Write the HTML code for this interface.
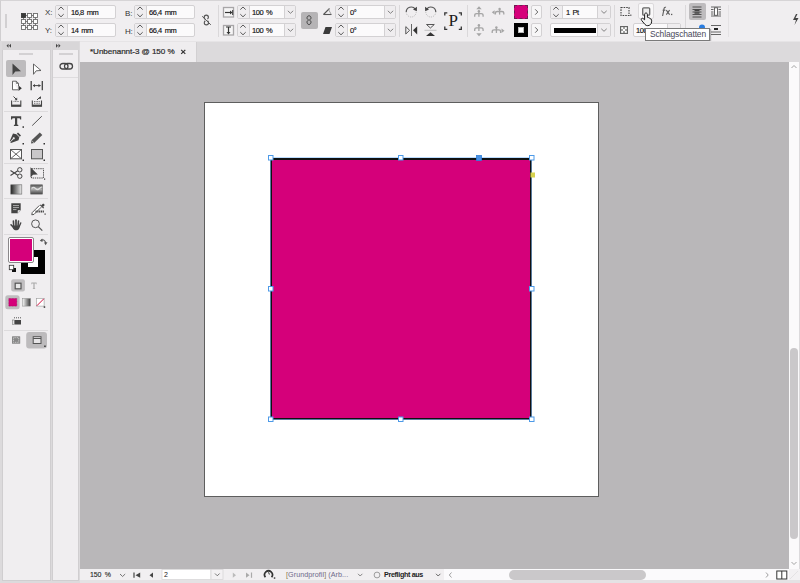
<!DOCTYPE html>
<html><head><meta charset="utf-8">
<style>
*{margin:0;padding:0;box-sizing:border-box}
html,body{width:800px;height:583px;overflow:hidden;background:#dcdadc;font-family:"Liberation Sans",sans-serif;}
.a{position:absolute}
#top{left:0;top:0;width:800px;height:41px;background:#f0eef0;border-top:1px solid #d6d4d6;border-left:1px solid #d0ced0}
.fld{position:absolute;height:14px;background:#fbfafb;border:1px solid #d3d1d3;border-radius:2px}
.spin svg,.dd svg{display:block}
.spin{position:absolute;left:0;top:0;bottom:0;width:12px;background:#efedef;border-right:1px solid #d3d1d3}
.dd{position:absolute;right:0;top:0;bottom:0;width:11px;background:#efedef;border-left:1px solid #d3d1d3}
.ftx{position:absolute;top:2px;font-size:7.5px;color:#111;white-space:nowrap;letter-spacing:-0.45px;word-spacing:1.2px;-webkit-text-stroke:0.15px #111}
.lbl{position:absolute;font-size:8px;color:#333;letter-spacing:-0.2px}
.sep{position:absolute;width:1px;background:#dad8da}
#hdrL{left:2px;top:42px;width:49px;height:8px;background:#d8d6d8}
#hdrR{left:52px;top:42px;width:27px;height:8px;background:#d8d6d8}
#panL{left:2px;top:50px;width:49px;height:531px;background:#f0eef0;border:1px solid #d0ced0;border-top:none}
#panR{left:52px;top:50px;width:27px;height:531px;background:#f0eef0;border:1px solid #d0ced0;border-top:none}
#tabbar{left:80px;top:42px;width:720px;height:20px;background:#dcdadc}
#tab{left:80px;top:42px;width:116px;height:20px;background:#efedef}
#canvas{left:80px;top:62px;width:709px;height:507px;background:#b9b7b9}
#vscroll{left:789px;top:62px;width:10px;height:507px;background:#fbfafb}
#vthumb{left:790px;top:348px;width:8px;height:191px;background:#cac8ca;border-radius:4px}
#status{left:80px;top:569px;width:720px;height:11px;background:#f3f1f3}
#page{left:204px;top:102px;width:395px;height:395px;background:#fff;border:1px solid #5e5e5e}
#rect{left:270px;top:158px;width:262px;height:262px;background:#d5007a;border:2px solid #111}
.h{position:absolute;width:6px;height:6px;border:1px solid #4a90e2;background:#fff}
</style></head><body>

<div id="top" class="a"></div>
<!-- grip -->
<div class="a" style="left:5px;top:14px;width:2px;height:14px;background:#d2d0d2"></div>
<!-- reference point grid -->
<svg class="a" style="left:20px;top:11.5px" width="20" height="20" viewBox="0 0 20 20">
<g stroke="#6e6e6e" stroke-width="0.9" fill="#fff">
<line x1="3.5" y1="3.5" x2="15.5" y2="3.5"/><line x1="3.5" y1="9.5" x2="15.5" y2="9.5"/><line x1="3.5" y1="15.5" x2="15.5" y2="15.5"/>
<line x1="3.5" y1="3.5" x2="3.5" y2="15.5"/><line x1="9.5" y1="3.5" x2="9.5" y2="15.5"/><line x1="15.5" y1="3.5" x2="15.5" y2="15.5"/>
<rect x="1.5" y="1.5" width="4" height="4" fill="#3a3a3a" stroke="#3a3a3a"/>
<rect x="7.5" y="1.5" width="4" height="4"/><rect x="13.5" y="1.5" width="4" height="4"/>
<rect x="1.5" y="7.5" width="4" height="4"/><rect x="7.5" y="7.5" width="4" height="4"/><rect x="13.5" y="7.5" width="4" height="4"/>
<rect x="1.5" y="13.5" width="4" height="4"/><rect x="7.5" y="13.5" width="4" height="4"/><rect x="13.5" y="13.5" width="4" height="4"/>
</g></svg>
<div class="lbl" style="left:45px;top:8px">X:</div>
<div class="lbl" style="left:45px;top:26px">Y:</div>
<div class="fld" style="left:55px;top:5px;width:61px"><div class="spin"><svg width="11" height="12" viewBox="0 0 11 12"><path d="M2.3 3.6L5 1L7.7 3.6M2.3 8.2L5 10.8L7.7 8.2" stroke="#4a4a4a" fill="none" stroke-width="0.9"/></svg></div><div class="ftx" style="left:15px">16,8 mm</div></div>
<div class="fld" style="left:55px;top:23px;width:61px"><div class="spin"><svg width="11" height="12" viewBox="0 0 11 12"><path d="M2.3 3.6L5 1L7.7 3.6M2.3 8.2L5 10.8L7.7 8.2" stroke="#4a4a4a" fill="none" stroke-width="0.9"/></svg></div><div class="ftx" style="left:15px">14 mm</div></div>
<div class="lbl" style="left:125px;top:9px">B:</div>
<div class="lbl" style="left:125px;top:27px">H:</div>
<div class="fld" style="left:134px;top:5px;width:61px"><div class="spin"><svg width="11" height="12" viewBox="0 0 11 12"><path d="M2.3 3.6L5 1L7.7 3.6M2.3 8.2L5 10.8L7.7 8.2" stroke="#4a4a4a" fill="none" stroke-width="0.9"/></svg></div><div class="ftx" style="left:14px">66,4 mm</div></div>
<div class="fld" style="left:134px;top:23px;width:61px"><div class="spin"><svg width="11" height="12" viewBox="0 0 11 12"><path d="M2.3 3.6L5 1L7.7 3.6M2.3 8.2L5 10.8L7.7 8.2" stroke="#4a4a4a" fill="none" stroke-width="0.9"/></svg></div><div class="ftx" style="left:14px">66,4 mm</div></div>
<!-- unlink -->
<svg class="a" style="left:200px;top:13px" width="14" height="14" viewBox="0 0 14 14">
<path d="M5.2 6.3C4.5 5.8 4.2 5 4.2 4.2C4.2 3 5 2.1 6.3 2.1C7.6 2.1 8.4 3 8.4 4.2C8.4 5 8 5.6 7.4 6M7.5 7.6C8.2 8.1 8.5 8.9 8.5 9.7C8.5 10.9 7.7 11.9 6.4 11.9C5.1 11.9 4.3 10.9 4.3 9.7C4.3 8.9 4.6 8.3 5.3 7.8" stroke="#555" stroke-width="1.15" fill="none"/>
<line x1="2.2" y1="3.3" x2="10.8" y2="11.8" stroke="#555" stroke-width="1"/></svg>
<div class="sep" style="left:218px;top:5px;height:32px"></div>
<!-- scale icons -->
<svg class="a" style="left:222px;top:6px" width="14" height="13" viewBox="0 0 14 13">
<rect x="1.5" y="1.5" width="10" height="9.5" fill="#f6f5f6" stroke="#a8a6a8" stroke-width="1.3"/>
<path d="M3 6.5H9" stroke="#333" stroke-width="1.2"/><path d="M8 4.5L10.5 6.5L8 8.5Z" fill="#333"/><path d="M10.7 4V9" stroke="#333" stroke-width="1"/>
</svg>
<svg class="a" style="left:222px;top:24px" width="14" height="13" viewBox="0 0 14 13">
<rect x="1.5" y="1.5" width="10" height="9.5" fill="#f6f5f6" stroke="#a8a6a8" stroke-width="1.3"/>
<path d="M6.5 3V9" stroke="#333" stroke-width="1.2"/><path d="M4.5 8L6.5 10.5L8.5 8Z" fill="#333"/><path d="M4 3H9" stroke="#333" stroke-width="1"/>
</svg>
<div class="fld" style="left:237px;top:5px;width:59px"><div class="spin"><svg width="11" height="12" viewBox="0 0 11 12"><path d="M2.3 3.6L5 1L7.7 3.6M2.3 8.2L5 10.8L7.7 8.2" stroke="#4a4a4a" fill="none" stroke-width="0.9"/></svg></div><div class="ftx" style="left:14px">100 %</div><div class="dd"><svg width="11" height="12" viewBox="0 0 11 12"><path d="M2.8 4.8L5.5 7.3L8.2 4.8" stroke="#777" fill="none" stroke-width="0.9"/></svg></div></div>
<div class="fld" style="left:237px;top:23px;width:59px"><div class="spin"><svg width="11" height="12" viewBox="0 0 11 12"><path d="M2.3 3.6L5 1L7.7 3.6M2.3 8.2L5 10.8L7.7 8.2" stroke="#4a4a4a" fill="none" stroke-width="0.9"/></svg></div><div class="ftx" style="left:14px">100 %</div><div class="dd"><svg width="11" height="12" viewBox="0 0 11 12"><path d="M2.8 4.8L5.5 7.3L8.2 4.8" stroke="#777" fill="none" stroke-width="0.9"/></svg></div></div>
<!-- chain button -->
<div class="a" style="left:301px;top:12px;width:17px;height:17px;background:#b6b4b6;border-radius:2px"></div>
<svg class="a" style="left:304px;top:14px" width="10" height="13" viewBox="0 0 10 13">
<path d="M5 1.8C3.6 1.8 3 2.8 3 3.9C3 5 3.8 5.6 4.6 6C3.8 6.4 3 7 3 8.1C3 9.2 3.6 10.5 5 10.5C6.4 10.5 7 9.2 7 8.1C7 7 6.2 6.4 5.4 6C6.2 5.6 7 5 7 3.9C7 2.8 6.4 1.8 5 1.8Z" stroke="#444" stroke-width="1" fill="none"/></svg>
<!-- angle/shear icons -->
<svg class="a" style="left:322px;top:7px" width="11" height="9" viewBox="0 0 11 9">
<path d="M1.5 7.5L7.5 1.5" stroke="#555" stroke-width="1.1"/><path d="M1.5 7.5H9.5" stroke="#555" stroke-width="1.1"/><path d="M6.5 2.5L9.3 7.5" stroke="#999" stroke-width="0.9"/></svg>
<svg class="a" style="left:322px;top:26px" width="11" height="9" viewBox="0 0 11 9">
<path d="M3.5 1H10L7.5 8H1Z" fill="#3a3a3a"/></svg>
<div class="fld" style="left:335px;top:5px;width:61px"><div class="spin"><svg width="11" height="12" viewBox="0 0 11 12"><path d="M2.3 3.6L5 1L7.7 3.6M2.3 8.2L5 10.8L7.7 8.2" stroke="#4a4a4a" fill="none" stroke-width="0.9"/></svg></div><div class="ftx" style="left:14px">0°</div><div class="dd"><svg width="11" height="12" viewBox="0 0 11 12"><path d="M2.8 4.8L5.5 7.3L8.2 4.8" stroke="#777" fill="none" stroke-width="0.9"/></svg></div></div>
<div class="fld" style="left:335px;top:23px;width:61px"><div class="spin"><svg width="11" height="12" viewBox="0 0 11 12"><path d="M2.3 3.6L5 1L7.7 3.6M2.3 8.2L5 10.8L7.7 8.2" stroke="#4a4a4a" fill="none" stroke-width="0.9"/></svg></div><div class="ftx" style="left:14px">0°</div><div class="dd"><svg width="11" height="12" viewBox="0 0 11 12"><path d="M2.8 4.8L5.5 7.3L8.2 4.8" stroke="#777" fill="none" stroke-width="0.9"/></svg></div></div>
<div class="sep" style="left:399px;top:5px;height:32px"></div>
<!-- rotate -->
<svg class="a" style="left:404px;top:5px" width="15" height="14" viewBox="0 0 15 14">
<path d="M2.2 7A5 5 0 0 1 11.3 4.2" stroke="#555" stroke-width="1.2" fill="none"/>
<path d="M12.2 7A5 5 0 0 1 2.2 7" stroke="#aaa" stroke-width="0.8" stroke-dasharray="1 1" fill="none"/>
<path d="M9 4.5L13 1.8L12.8 6.3Z" fill="#444"/></svg>
<svg class="a" style="left:423px;top:5px" width="15" height="14" viewBox="0 0 15 14">
<path d="M12.8 7A5 5 0 0 0 3.7 4.2" stroke="#555" stroke-width="1.2" fill="none"/>
<path d="M2.8 7A5 5 0 0 0 12.8 7" stroke="#aaa" stroke-width="0.8" stroke-dasharray="1 1" fill="none"/>
<path d="M6 4.5L2 1.8L2.2 6.3Z" fill="#444"/></svg>
<svg class="a" style="left:404px;top:23px" width="15" height="14" viewBox="0 0 15 14">
<path d="M1.8 3.6L5.6 7.3L1.8 11Z" fill="none" stroke="#555" stroke-width="1"/>
<path d="M7.5 1V13" stroke="#555" stroke-width="0.9"/>
<path d="M13.2 3.2L9 7.3L13.2 11.4Z" fill="#333"/></svg>
<svg class="a" style="left:423px;top:23px" width="15" height="14" viewBox="0 0 15 14">
<path d="M3.5 1.5H11.3L7.4 5Z" fill="none" stroke="#555" stroke-width="1"/>
<path d="M1.5 7.3H13.5" stroke="#bbb" stroke-width="0.9"/>
<path d="M3 13H12L7.5 9.3Z" fill="#333"/></svg>
<!-- [P] -->
<svg class="a" style="left:443px;top:11px" width="20" height="20" viewBox="0 0 20 20">
<path d="M1.8 4.5V1.8H4.3M15.8 1.8H18.3V4.5M18.3 15.6V18.3H15.8M4.3 18.3H1.8V15.6" stroke="#333" stroke-width="1.3" fill="none"/></svg>
<div class="a" style="left:448.5px;top:11px;font-family:'Liberation Serif',serif;font-size:17px;color:#1a1a1a;line-height:20px">P</div>
<div class="sep" style="left:467px;top:5px;height:32px"></div>


<!-- align icons (disabled) -->
<svg class="a" style="left:470px;top:3px" width="38" height="36" viewBox="470 3 38 36">
<g fill="#a5a5a5">
<path d="M476.3 9.2L479 6.2L481.7 9.2Z"/>
<circle cx="478.9" cy="11.3" r="1.2"/>
<path d="M491.8 12.3L494.6 10.2V14.4Z"/>
<circle cx="499.6" cy="9" r="1.2"/>
<circle cx="478.9" cy="25.3" r="1.2"/>
<path d="M476.3 33.3L479 36.3L481.7 33.3Z"/>
<circle cx="496.4" cy="27.4" r="1.2"/>
<path d="M501.5 28.5L504.5 30.8L501.5 33Z"/>
</g>
<g stroke="#a5a5a5" fill="none" stroke-width="1.3">
<path d="M478.9 11.5V16.8"/><path d="M474.7 16.8V15.5Q474.7 13.7 476.6 13.7H481.2Q483.1 13.7 483.1 15.5V16.8"/>
<path d="M499.6 9.2V14.6"/><path d="M495.4 14.6V13.3Q495.4 11.5 497.3 11.5H501.9Q503.8 11.5 503.8 13.3V14.6"/>
<path d="M478.9 25.5V31"/><path d="M474.7 31V29.7Q474.7 27.9 476.6 27.9H481.2Q483.1 27.9 483.1 29.7V31"/>
<path d="M496.4 27.6V33"/><path d="M492.2 33V31.7Q492.2 29.9 494.1 29.9H498.7Q500.6 29.9 500.6 31.7V33"/>
</g></svg>
<!-- fill / stroke swatches -->
<div class="a" style="left:514px;top:5px;width:14px;height:14px;background:#d5007a;border:1px dashed #6a2050"></div>
<div class="a" style="left:531px;top:5px;width:11px;height:14px;background:#f7f6f7;border:1px solid #d3d1d3;border-radius:2px"><svg style="display:block" width="9" height="12" viewBox="0 0 9 12"><path d="M3.2 3.3L5.8 6L3.2 8.7" stroke="#555" fill="none" stroke-width="0.9"/></svg></div>
<div class="a" style="left:514px;top:23px;width:14px;height:14px;background:#000"></div>
<div class="a" style="left:519px;top:28px;width:4px;height:4px;background:#fff;outline:1px solid #bbb"></div>
<div class="a" style="left:531px;top:23px;width:11px;height:14px;background:#f7f6f7;border:1px solid #d3d1d3;border-radius:2px"><svg style="display:block" width="9" height="12" viewBox="0 0 9 12"><path d="M3.2 3.3L5.8 6L3.2 8.7" stroke="#555" fill="none" stroke-width="0.9"/></svg></div>
<div class="fld" style="left:550px;top:5px;width:61px"><div class="spin"><svg width="11" height="12" viewBox="0 0 11 12"><path d="M2.3 3.6L5 1L7.7 3.6M2.3 8.2L5 10.8L7.7 8.2" stroke="#4a4a4a" fill="none" stroke-width="0.9"/></svg></div><div class="ftx" style="left:15px">1 Pt</div><div class="dd" style="width:13px"><svg width="12" height="12" viewBox="0 0 12 12"><path d="M3.3 4.8L6 7.3L8.7 4.8" stroke="#777" fill="none" stroke-width="0.9"/></svg></div></div>
<div class="fld" style="left:550px;top:23px;width:61px;background:#fdfcfd"><div class="a" style="left:3px;top:4px;width:42px;height:5px;background:#000"></div><div class="dd" style="width:13px"><svg width="12" height="12" viewBox="0 0 12 12"><path d="M3.3 4.8L6 7.3L8.7 4.8" stroke="#777" fill="none" stroke-width="0.9"/></svg></div></div>
<div class="sep" style="left:614px;top:5px;height:32px"></div>
<!-- corner options -->
<svg class="a" style="left:619px;top:6px" width="14" height="12" viewBox="0 0 14 12">
<rect x="2" y="1.5" width="8" height="8" fill="none" stroke="#444" stroke-width="1.1" stroke-dasharray="1.6 1"/>
<rect x="11.2" y="8.6" width="1.2" height="1.2" fill="#444"/></svg>
<!-- drop shadow (hover) -->
<div class="a" style="left:638px;top:3px;width:16px;height:16px;background:#f9f8f9;border:1px solid #dcdadc;border-radius:2px"></div>
<svg class="a" style="left:640px;top:6px" width="12" height="11" viewBox="0 0 12 11">
<rect x="2.7" y="1.8" width="7" height="7.4" fill="#ececec" stroke="#666" stroke-width="1.3" rx="1"/></svg>
<svg class="a" style="left:661px;top:6px" width="13" height="11" viewBox="0 0 13 11"><path d="M5 1.3C4 1 3.3 1.4 3.1 2.4L1.6 10" stroke="#5a5a5a" stroke-width="1.1" fill="none"/><path d="M1.6 4.2H4.4" stroke="#5a5a5a" stroke-width="1"/><path d="M5.3 4.2L8.6 8.6M8.6 4.2L5.3 8.6" stroke="#5a5a5a" stroke-width="1.1"/><rect x="10" y="7.8" width="1.3" height="1.3" fill="#5a5a5a"/></svg>
<!-- opacity -->
<svg class="a" style="left:619px;top:25px" width="10" height="10" viewBox="0 0 10 10">
<rect x="1.6" y="1.6" width="6.8" height="6.8" fill="#8e8e8e" stroke="#666" stroke-width="1.2"/>
<rect x="2.2" y="2.2" width="2" height="2" fill="#fff"/><rect x="5.8" y="2.2" width="2" height="2" fill="#fff"/><rect x="4" y="4" width="2" height="2" fill="#fff"/><rect x="2.2" y="5.8" width="2" height="2" fill="#fff"/><rect x="5.8" y="5.8" width="2" height="2" fill="#fff"/></svg>
<div class="fld" style="left:633px;top:23px;width:48px"><div class="ftx" style="left:2px">100 %</div><div class="dd" style="width:13px"></div></div>
<div class="sep" style="left:685px;top:5px;height:32px"></div>
<!-- wrap buttons -->
<div class="a" style="left:689px;top:3px;width:17px;height:17px;background:#bebcbe;border-radius:2px"></div>
<svg class="a" style="left:690px;top:5px" width="14" height="13" viewBox="0 0 14 13" stroke="#444">
<path d="M2.5 2H11.5M2.5 4.5H11.5M2.5 7H11.5M2.5 9.5H11.5M2.5 12H11.5" stroke-width="0.9"/>
<path d="M4.5 5.5H9.5M4.5 8H9.5" stroke-width="1.4"/></svg>
<svg class="a" style="left:709px;top:5px" width="14" height="13" viewBox="0 0 14 13" stroke="#555">
<path d="M2 2H12M2 11H12" stroke-width="0.9"/><path d="M2 4.5H4.5M2 7H4.5M2 9H4.5M9.5 4.5H12M9.5 7H12M9.5 9H12" stroke-width="0.9"/>
<rect x="5.5" y="2.8" width="3" height="7.5" fill="#fff" stroke-width="0.9"/></svg>
<svg class="a" style="left:697px;top:23px" width="10" height="8" viewBox="0 0 10 8"><circle cx="5" cy="4.5" r="3" fill="#2a7de1"/></svg>
<svg class="a" style="left:709px;top:23px" width="14" height="14" viewBox="0 0 14 14" stroke="#555">
<path d="M2 2.5H12M2 9H12M2 11.5H12" stroke-width="0.9"/><rect x="5" y="5" width="4" height="2" fill="#222" stroke="none"/></svg>
<div class="sep" style="left:728px;top:5px;height:32px;background:#e4e2e4"></div>
<!-- lightning -->
<svg class="a" style="left:791px;top:13px" width="9" height="13" viewBox="0 0 9 13">
<path d="M5 1L2 7H5L3.5 12L7.5 5H4.5L6.5 1Z" fill="#444"/></svg>
<!-- tooltip -->
<div class="a" style="left:645px;top:28px;width:65px;height:13px;background:#fff;border:1px solid #7a7a7a;box-shadow:1px 1px 1px rgba(0,0,0,0.25)"></div>
<div class="a" style="left:650px;top:29px;font-size:8.5px;color:#4a4a5a;letter-spacing:-0.15px;white-space:nowrap;line-height:11px">Schlagschatten</div>
<!-- hand cursor -->
<svg class="a" style="left:636px;top:3px" width="20" height="25" viewBox="0 0 20 25">
<path d="M10 10C9.2 10 8.6 10.6 8.6 11.5V16.8L7.2 15.6C6.6 15.1 5.7 15.2 5.4 15.9C5.1 16.4 5.3 17 5.7 17.5L9 21.5C9.8 22.3 10.7 22.8 11.8 22.7C13.8 22.6 15.6 21 15.6 18.8V17.2C15.6 16.4 15 15.8 14.3 15.8C14.1 15.2 13.5 14.8 12.9 14.9C12.6 14.4 12 14.2 11.4 14.3V11.5C11.4 10.6 10.8 10 10 10Z" fill="#f2f2f2" stroke="#1a1a1a" stroke-width="1"/></svg>
<div id="hdrL" class="a"></div>
<div id="hdrR" class="a"></div>
<div id="panL" class="a"></div>
<div id="panR" class="a"></div>

<!-- panel headers content -->
<svg class="a" style="left:0;top:42px" width="80" height="8" viewBox="0 0 80 8">
<path d="M8.5 1.8L6.5 3.8L8.5 5.8Z M11 1.8L9 3.8L11 5.8Z" fill="#444"/>
<path d="M56 1.8L58 3.8L56 5.8Z M58.5 1.8L60.5 3.8L58.5 5.8Z" fill="#444"/>
</svg>
<div class="a" style="left:19px;top:53px;width:14px;height:2px;background:#d3d1d3"></div>
<div class="a" style="left:59px;top:53px;width:14px;height:2px;background:#d3d1d3"></div>
<!-- panel 2 link icon -->
<svg class="a" style="left:58px;top:61px" width="17" height="11" viewBox="0 0 17 11">
<rect x="2" y="2.5" width="8" height="5.5" rx="2.75" fill="none" stroke="#444" stroke-width="1.3"/>
<rect x="6.5" y="2.5" width="8" height="5.5" rx="2.75" fill="none" stroke="#444" stroke-width="1.3"/></svg>
<div class="a" style="left:53px;top:77px;width:25px;height:1px;background:#dedcde"></div>
<!-- selection active btn -->
<div class="a" style="left:6px;top:60px;width:20px;height:17px;background:#bdbbbd;border-radius:2px"></div>
<svg class="a" style="left:0;top:50px" width="52" height="310" viewBox="0 50 52 310">
<!-- selection -->
<path d="M12.5 63.5V75L15.3 71.5L21 71.2Z" fill="#444"/>
<!-- direct selection -->
<path d="M33.5 64V74.3L36.2 70.8L41 70.5Z" fill="#fff" stroke="#555" stroke-width="0.9"/>
<!-- page tool -->
<path d="M12.5 81.2H16.3L18.5 83.4V86M18 89.8H12.5V81.2" fill="#fff" stroke="#555" stroke-width="0.9"/>
<path d="M16.3 81.2V83.4H18.5" fill="none" stroke="#555" stroke-width="0.8"/>
<path d="M18.5 85.5V91L21.8 88.3Z" fill="#333"/>
<!-- gap tool -->
<path d="M31.2 81V90.2M42.3 81V90.2" stroke="#444" stroke-width="1.3"/>
<path d="M33 85.6H40.5" stroke="#444" stroke-width="1"/>
<path d="M32.8 85.6L35 84V87.2Z M40.7 85.6L38.5 84V87.2Z" fill="#444"/>
<!-- content collector -->
<path d="M11.6 100.5V106.3H20.8V100.5" fill="none" stroke="#444" stroke-width="1.1"/>
<rect x="11.6" y="104.6" width="9.2" height="1.8" fill="#444"/>
<path d="M13.5 101.5H19" stroke="#666" stroke-width="0.8" stroke-dasharray="1 0.6"/>
<path d="M13.5 96.5L16.3 99.3" stroke="#444" stroke-width="1"/><path d="M17.2 97.5V100.2H14.5Z" fill="#444"/>
<!-- content placer -->
<path d="M32.3 100.5V106.3H41.5V100.5" fill="none" stroke="#444" stroke-width="1.1"/>
<rect x="32.3" y="104.6" width="9.2" height="1.8" fill="#444"/>
<path d="M34 101.5H40M34 103.3H40" stroke="#555" stroke-width="0.8" stroke-dasharray="1 0.6"/>
<path d="M37 100L39.8 97.2" stroke="#444" stroke-width="1"/><path d="M41 96V98.8H38.3Z" fill="#444"/>
<line x1="4" y1="111.5" x2="48" y2="111.5" stroke="#dddbdd" stroke-width="1"/>
<!-- type -->
<path d="M11 116.3H21.2V119.5H20.2L19.7 118.2H17.2V124.5L18.3 125V126H13.9V125L15 124.5V118.2H12.5L12 119.5H11Z" fill="#444"/>
<rect x="22.5" y="126.3" width="1.5" height="1.5" fill="#333"/>
<!-- line -->
<path d="M32.2 125.6L41.8 116.2" stroke="#555" stroke-width="1"/>
<!-- pen -->
<path d="M18 132.5L21 135.5L19.8 136.7L16.8 133.7Z" fill="#444"/>
<path d="M16.3 134.2L19.3 137.2L18.5 140.2L11 143L10.3 142.3L13.5 139.3A1 1 0 1 0 12.8 138.6L10.3 141.6L9.8 141.1L13 133.5Z" fill="#444"/>
<rect x="22.5" y="143" width="1.5" height="1.5" fill="#333"/>
<!-- pencil -->
<path d="M39.8 132.5L42.3 135L34.2 143.1L31 143.5L31.5 140.3Z" fill="#555"/>
<path d="M31.5 140.3L34.2 143.1" stroke="#eee" stroke-width="0.6"/>
<rect x="43.5" y="143" width="1.5" height="1.5" fill="#333"/>
<!-- rect frame -->
<rect x="10.5" y="149.5" width="11" height="9.3" fill="#fff" stroke="#555" stroke-width="1"/>
<path d="M10.5 149.5L21.5 158.8M21.5 149.5L10.5 158.8" stroke="#555" stroke-width="0.9"/>
<rect x="22.5" y="159.5" width="1.5" height="1.5" fill="#333"/>
<!-- rect -->
<rect x="31.5" y="149.5" width="11" height="9.3" fill="#c9c7c9" stroke="#555" stroke-width="1"/>
<rect x="43.5" y="159.5" width="1.5" height="1.5" fill="#333"/>
<line x1="4" y1="163.5" x2="48" y2="163.5" stroke="#dddbdd" stroke-width="1"/>
<!-- scissors -->
<circle cx="19.8" cy="169.8" r="2.2" fill="none" stroke="#444" stroke-width="1"/>
<circle cx="19.8" cy="176.2" r="2.2" fill="none" stroke="#444" stroke-width="1"/>
<path d="M17.8 170.8L10.5 175.5M17.8 175.2L10.5 170.5" stroke="#444" stroke-width="1.1"/>
<!-- free transform -->
<rect x="31.5" y="168.7" width="12" height="9.3" fill="none" stroke="#555" stroke-width="1" stroke-dasharray="1.4 0.8"/>
<path d="M30.5 167.3V177.5L33 174.8L37.8 174.5Z" fill="#444"/>
<rect x="44" y="178.5" width="1.2" height="1.2" fill="#333"/>
<!-- gradient swatch -->
<defs>
<linearGradient id="g1" x1="0" x2="1" y1="0" y2="0"><stop offset="0" stop-color="#222"/><stop offset="1" stop-color="#eee"/></linearGradient>
<linearGradient id="g2" x1="0" x2="0" y1="0" y2="1"><stop offset="0" stop-color="#555"/><stop offset="0.5" stop-color="#aaa"/><stop offset="1" stop-color="#444"/></linearGradient>
<linearGradient id="g3" x1="0" x2="1" y1="0" y2="0"><stop offset="0" stop-color="#fff"/><stop offset="1" stop-color="#333"/></linearGradient>
</defs>
<rect x="10.8" y="184.8" width="11" height="9.3" fill="url(#g1)" stroke="#666" stroke-width="0.6"/>
<!-- gradient feather -->
<rect x="30.7" y="184.8" width="11.8" height="9.3" fill="url(#g2)" stroke="#666" stroke-width="0.6"/>
<path d="M31.5 188.5Q33.5 186.5 35.5 188.5T39.5 188.5T42 187.5" stroke="#ddd" stroke-width="1.3" fill="none"/>
<line x1="4" y1="198.5" x2="48" y2="198.5" stroke="#dddbdd" stroke-width="1"/>
<!-- note -->
<path d="M11.3 203.3H20.7V210.5L18 213.2H11.3Z" fill="#444"/>
<path d="M13 205.6H19M13 207.6H19M13 209.6H16.5" stroke="#ccc" stroke-width="0.8"/>
<path d="M18 213.2V210.5H20.7" fill="#ddd" stroke="#eee" stroke-width="0.6"/>
<!-- eyedropper -->
<path d="M43.2 203.5L44.8 205.1L43 207L41.3 205.3Z" fill="#444"/>
<path d="M40.3 204.8L43.7 208.2" stroke="#444" stroke-width="1.2"/>
<path d="M41.2 207.2L34 214.4L31.8 214.8L32.2 212.6L39.4 205.4" fill="#fff" stroke="#444" stroke-width="0.9"/>
<path d="M35.5 211.5H44" stroke="#444" stroke-width="1.8" stroke-dasharray="1.2 0.6"/>
<rect x="44.5" y="213.5" width="1.2" height="1.2" fill="#333"/>
<!-- hand -->
<g stroke="#444" stroke-linecap="round" fill="none">
<path d="M13.7 226L13.4 221" stroke-width="1.6"/>
<path d="M16 225.5V220.2" stroke-width="1.7"/>
<path d="M18 226L18.5 221" stroke-width="1.6"/>
<path d="M19 227L20.7 223" stroke-width="1.4"/>
<path d="M14 228L11 224.8" stroke-width="1.5"/>
</g>
<path d="M12.5 225.5H19.8L19.3 228.2C18.8 229.6 17.6 230.3 16.2 230.3C14.6 230.3 13.4 229.4 12.8 228Z" fill="#444"/>
<!-- zoom -->
<circle cx="35.5" cy="223.8" r="3.9" fill="none" stroke="#555" stroke-width="1"/>
<path d="M38.3 226.6L42.3 230.6" stroke="#555" stroke-width="1.3"/>
<line x1="4" y1="234.5" x2="48" y2="234.5" stroke="#dddbdd" stroke-width="1"/>
</svg>

<!-- fill/stroke big -->
<div class="a" style="left:21px;top:250px;width:24px;height:24px;background:#000"></div>
<div class="a" style="left:28px;top:257px;width:10px;height:10px;background:#fff"></div>
<div class="a" style="left:7.5px;top:236.5px;width:26px;height:26px;border:1px solid #8a888a;border-radius:2px;background:#fff"></div>
<div class="a" style="left:9.5px;top:238.5px;width:22px;height:22px;background:#d5007a"></div>
<svg class="a" style="left:0;top:234px" width="52" height="118" viewBox="0 234 52 118">
<!-- swap arrow -->
<path d="M41 240.5Q44.5 238.5 45.8 243" stroke="#555" stroke-width="1.1" fill="none"/>
<path d="M39.8 240.8L42.3 238.6L42.5 241.9Z" fill="#555"/><path d="M44 242.5L47.5 242.3L45.6 245.3Z" fill="#555"/>
<!-- default -->
<rect x="12" y="268" width="4" height="4" fill="#111"/>
<rect x="9.3" y="265.3" width="4.4" height="4.4" fill="#fff" stroke="#333" stroke-width="0.8"/>
<!-- container btn -->
<rect x="11.2" y="279.3" width="13.7" height="12.3" rx="2" fill="#c0bec0"/>
<rect x="15.2" y="283.2" width="5.8" height="5.6" fill="#e8e8e8" stroke="#555" stroke-width="1.2"/>
<!-- T light -->
<path d="M31.4 282.6H36.6V284.3H36L35.8 283.5H34.6V288.3L35.2 288.6V289.1H32.8V288.6L33.4 288.3V283.5H32.2L32 284.3H31.4Z" fill="#aaa"/>
<!-- fill btn -->
<rect x="5.3" y="295.3" width="14.3" height="13.9" rx="2.5" fill="#bfbdbf"/>
<rect x="8.8" y="298.5" width="8" height="7.6" fill="#d5007a" stroke="#a0005a" stroke-width="0.5" stroke-dasharray="1 0.5"/>
<!-- gradient -->
<rect x="22.3" y="298.5" width="8.2" height="7.6" fill="url(#g3b)" stroke="#888" stroke-width="0.5"/>
<defs><linearGradient id="g3b" x1="0" x2="1"><stop offset="0" stop-color="#fff"/><stop offset="1" stop-color="#3a3a3a"/></linearGradient></defs>
<!-- none -->
<rect x="36.5" y="298.5" width="7.6" height="7.6" fill="#fff" stroke="#999" stroke-width="0.6"/>
<path d="M36.8 305.8L43.8 298.8" stroke="#d01040" stroke-width="1"/>
<rect x="43.7" y="306.3" width="1.5" height="1.5" fill="#333"/>
<!-- apply formatting -->
<rect x="12.5" y="320" width="1.6" height="4.5" fill="#fff" stroke="#777" stroke-width="0.6"/>
<rect x="14.5" y="320" width="6.5" height="4.5" fill="#444"/>
<path d="M14 317.8H21" stroke="#555" stroke-width="1" stroke-dasharray="1 1"/>
<line x1="4" y1="330.5" x2="48" y2="330.5" stroke="#dddbdd" stroke-width="1"/>
<!-- normal mode -->
<rect x="12" y="336.2" width="8.2" height="7.6" fill="#888" rx="0.5"/>
<rect x="13.5" y="337.7" width="5.2" height="4.6" fill="none" stroke="#ddd" stroke-width="0.8" stroke-dasharray="1 0.8"/>
<!-- screen mode btn -->
<rect x="26.2" y="332" width="20.8" height="16.4" rx="3" fill="#bdbbbd"/>
<rect x="33.2" y="336.7" width="7.8" height="6.8" fill="#e6e4e6" stroke="#555" stroke-width="1"/>
<path d="M33.2 338.5H41" stroke="#555" stroke-width="1"/>
<rect x="44.2" y="345.5" width="1.5" height="1.5" fill="#333"/>
</svg>
<div id="tabbar" class="a"></div>
<div id="tab" class="a"></div>
<div class="a" style="left:196px;top:42px;width:1px;height:20px;background:#d2d0d2"></div>
<div class="a" style="left:80px;top:41px;width:720px;height:1px;background:#e6e4e6"></div>

<div class="a" style="left:90px;top:47px;font-size:8.1px;color:#2a2a2a;white-space:nowrap;letter-spacing:-0.05px;line-height:10px;-webkit-text-stroke:0.2px #2a2a2a">*Unbenannt-3 @ 150 %</div>
<svg class="a" style="left:180px;top:49px" width="7" height="6" viewBox="0 0 7 6"><path d="M1.2 0.8L5.3 4.9M5.3 0.8L1.2 4.9" stroke="#333" stroke-width="1.2"/></svg>
<div id="canvas" class="a"></div>
<div id="vscroll" class="a"></div>
<div id="vthumb" class="a"></div>
<div id="status" class="a"></div>

<svg class="a" style="left:789px;top:62px" width="10" height="10" viewBox="0 0 10 10"><path d="M2.5 6L5 3.5L7.5 6" stroke="#999" stroke-width="0.9" fill="none"/></svg>
<svg class="a" style="left:789px;top:558px" width="10" height="10" viewBox="0 0 10 10"><path d="M2.5 4L5 6.5L7.5 4" stroke="#999" stroke-width="0.9" fill="none"/></svg>
<div class="a" style="left:80px;top:569px;width:364px;height:11px;background:#f1eff1"></div>
<div class="a" style="left:444px;top:569px;width:345px;height:11px;background:#fbfafc"></div>
<div class="a" style="left:509px;top:570px;width:137px;height:10px;background:#cac8ca;border-radius:5px"></div>
<div class="a" style="left:80px;top:580px;width:720px;height:3px;background:#e4e2e4"></div>
<div class="a" style="left:90px;top:570px;font-size:7px;color:#222;white-space:nowrap;line-height:9px;letter-spacing:-0.1px;word-spacing:1.5px;-webkit-text-stroke:0.1px #222">150 %</div>
<svg class="a" style="left:0;top:569px" width="800" height="12" viewBox="0 569 800 12">
<path d="M120 574L122.6 576.5L125.2 574" stroke="#666" stroke-width="0.9" fill="none"/>
<path d="M134 572.5V577.8" stroke="#444" stroke-width="1.2"/><path d="M140.2 572.5V577.8L135.5 575.15Z" fill="#444"/>
<path d="M153 572.5V577.8L149.5 575.15Z" fill="#444"/>
<rect x="162" y="569.5" width="49" height="10" fill="#fff" stroke="#d8d6d8" stroke-width="0.8"/>
<rect x="211" y="569.5" width="12" height="10" fill="#f3f1f3" stroke="#d8d6d8" stroke-width="0.8"/>
<path d="M215 573.5L217.3 575.8L219.6 573.5" stroke="#666" stroke-width="0.9" fill="none"/>
<path d="M232.8 572.5V577.8L236 575.15Z" fill="#bbb"/>
<path d="M246 572.5V577.8L249.5 575.15Z" fill="#aaa"/><path d="M251.5 572.5V577.8" stroke="#aaa" stroke-width="1.2"/>
<path d="M265.4 577.2A3.9 3.9 0 1 1 271.6 577.2" stroke="#333" stroke-width="1.7" fill="none"/>
<path d="M268.3 572.3L269.6 574.6" stroke="#555" stroke-width="1.1"/>
<rect x="273.8" y="577.3" width="1.5" height="1.5" fill="#444"/>
<path d="M358 573.8L360.2 576L362.4 573.8" stroke="#777" stroke-width="0.9" fill="none"/>
<circle cx="377" cy="575" r="2.9" fill="none" stroke="#888" stroke-width="0.8"/>
<path d="M436 573.8L438.2 576L440.4 573.8" stroke="#555" stroke-width="0.9" fill="none"/>
<path d="M451.5 572.5L449.3 575L451.5 577.5" stroke="#888" stroke-width="0.8" fill="none"/>
<path d="M766 572.5L768.2 575L766 577.5" stroke="#888" stroke-width="0.8" fill="none"/>
<rect x="776.8" y="571" width="10" height="8" fill="#fff" stroke="#333" stroke-width="1"/><path d="M781.8 571V579" stroke="#333" stroke-width="1"/>
<path d="M790 579L798 571" stroke="#e0dee0" stroke-width="0.8"/>
</svg>
<div class="a" style="left:164px;top:570px;font-size:7px;color:#222;line-height:9px">2</div>
<div class="a" style="left:286px;top:570px;font-size:7.2px;color:#6d6a8a;white-space:nowrap;line-height:9px;letter-spacing:0.05px"><span style="color:#8a7a50">[</span>Grundprofil<span style="color:#8a7a50">]</span> (Arb...</div>
<div class="a" style="left:384px;top:570px;font-size:7.2px;color:#222;white-space:nowrap;line-height:9px;font-weight:bold;letter-spacing:-0.35px">Preflight aus</div>
<div id="page" class="a"></div>
<div id="rect" class="a"></div>

<svg class="a" style="left:260px;top:150px" width="285" height="280" viewBox="260 150 285 280">
<path d="M270.5 157.5H531.5V419.5H270.5Z" fill="none" stroke="#8cc4ff" stroke-width="0.6"/>
<g fill="#fff" stroke="#4d9ae8" stroke-width="1">
<rect x="268.5" y="155.5" width="4.5" height="4.5"/>
<rect x="398.5" y="155.5" width="4.5" height="4.5"/>
<rect x="529.5" y="155.5" width="4.5" height="4.5"/>
<rect x="268.5" y="286.5" width="4.5" height="4.5"/>
<rect x="529.5" y="286.5" width="4.5" height="4.5"/>
<rect x="268.5" y="417" width="4.5" height="4.5"/>
<rect x="398.5" y="417" width="4.5" height="4.5"/>
<rect x="529.5" y="417" width="4.5" height="4.5"/>
</g>
<rect x="476.5" y="155.5" width="5" height="5" fill="#4a90e2" stroke="#2f7fd9" stroke-width="0.8"/>
<rect x="530.5" y="172.5" width="4.5" height="5" fill="#d6d24e"/>
</svg>
</body></html>
